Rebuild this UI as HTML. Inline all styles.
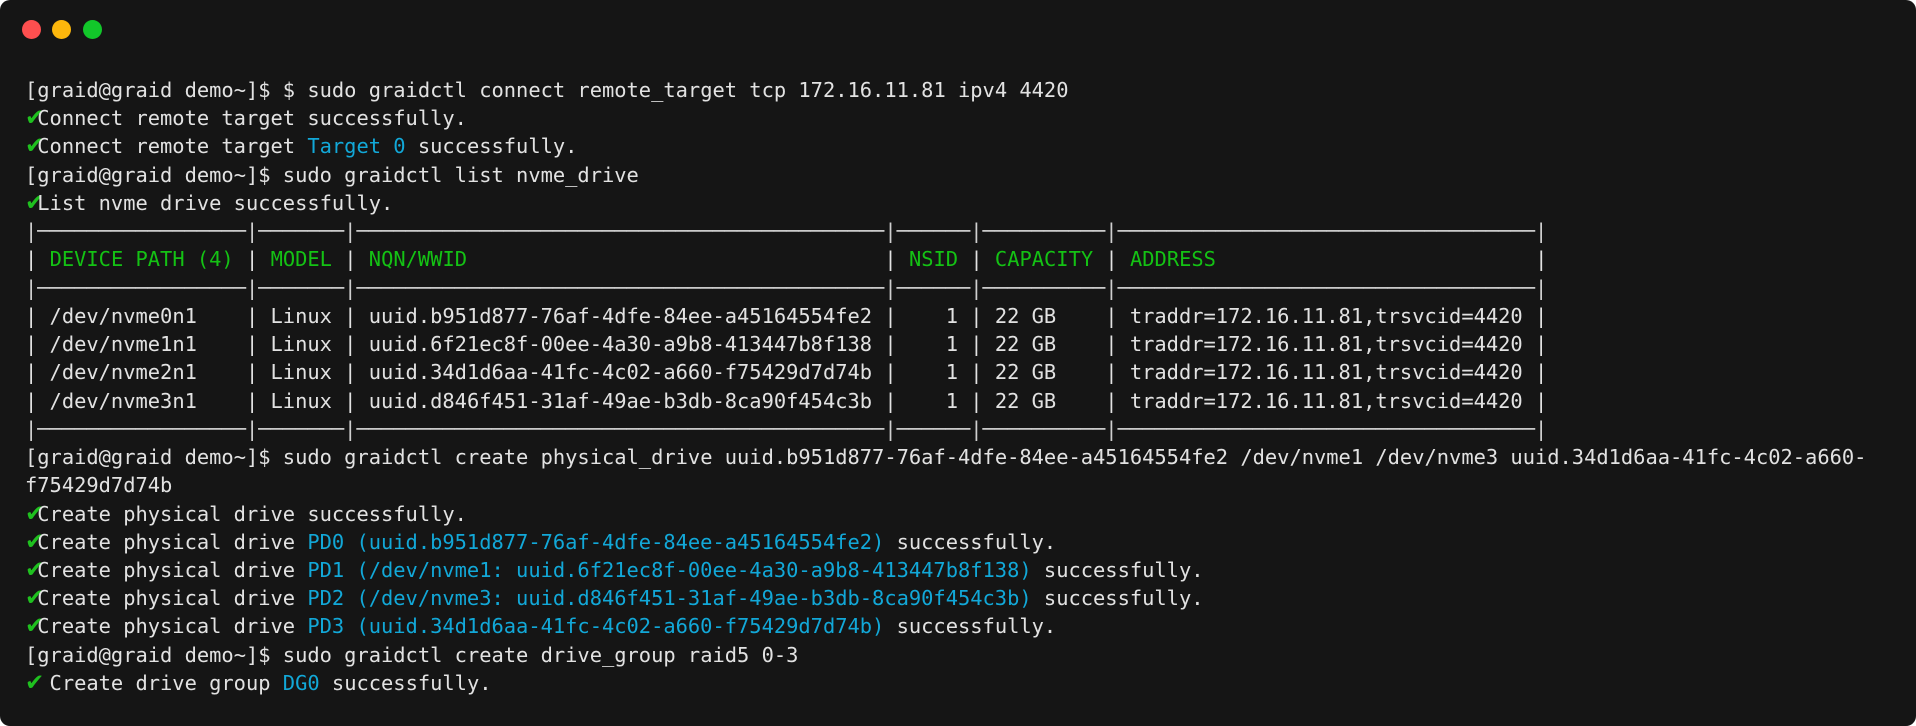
<!DOCTYPE html>
<html><head><meta charset="utf-8"><style>
html,body{margin:0;padding:0;background:#fff;}
.win{position:absolute;left:0;top:0;width:1916px;height:726px;background:#151515;border-radius:10px;overflow:hidden;}
.dot{position:absolute;top:20px;width:19px;height:19px;border-radius:50%;}
pre{position:absolute;left:25px;top:76px;margin:0;font-family:"DejaVu Sans Mono","Liberation Mono",monospace;font-size:20.4px;line-height:28.24px;color:#e2e2e2;white-space:pre;}
.g{color:#14c214}.c{color:#12a8d8}
.k{color:#1fc01f;display:inline-block;width:12.28px;font-family:"DejaVu Sans",sans-serif;font-size:23px;line-height:20px;overflow:visible;}
.t{color:#cfcfcf}
</style></head><body><div class="win">
<div class="dot" style="left:22px;background:#fe4f4f"></div>
<div class="dot" style="left:52px;background:#fdb70c"></div>
<div class="dot" style="left:83px;background:#12c72a"></div>
<pre>[graid@graid demo~]$ $ sudo graidctl connect remote_target tcp 172.16.11.81 ipv4 4420
<span class="k">✔</span>Connect remote target successfully.
<span class="k">✔</span>Connect remote target <span class="c">Target 0</span> successfully.
[graid@graid demo~]$ sudo graidctl list nvme_drive
<span class="k">✔</span>List nvme drive successfully.
<span class="t">|─────────────────|───────|───────────────────────────────────────────|──────|──────────|──────────────────────────────────|</span>
| <span class="g">DEVICE PATH (4)</span> | <span class="g">MODEL</span> | <span class="g">NQN/WWID</span>                                  | <span class="g">NSID</span> | <span class="g">CAPACITY</span> | <span class="g">ADDRESS</span>                          |
<span class="t">|─────────────────|───────|───────────────────────────────────────────|──────|──────────|──────────────────────────────────|</span>
| /dev/nvme0n1    | Linux | uuid.b951d877-76af-4dfe-84ee-a45164554fe2 |    1 | 22 GB    | traddr=172.16.11.81,trsvcid=4420 |
| /dev/nvme1n1    | Linux | uuid.6f21ec8f-00ee-4a30-a9b8-413447b8f138 |    1 | 22 GB    | traddr=172.16.11.81,trsvcid=4420 |
| /dev/nvme2n1    | Linux | uuid.34d1d6aa-41fc-4c02-a660-f75429d7d74b |    1 | 22 GB    | traddr=172.16.11.81,trsvcid=4420 |
| /dev/nvme3n1    | Linux | uuid.d846f451-31af-49ae-b3db-8ca90f454c3b |    1 | 22 GB    | traddr=172.16.11.81,trsvcid=4420 |
<span class="t">|─────────────────|───────|───────────────────────────────────────────|──────|──────────|──────────────────────────────────|</span>
[graid@graid demo~]$ sudo graidctl create physical_drive uuid.b951d877-76af-4dfe-84ee-a45164554fe2 /dev/nvme1 /dev/nvme3 uuid.34d1d6aa-41fc-4c02-a660-
f75429d7d74b
<span class="k">✔</span>Create physical drive successfully.
<span class="k">✔</span>Create physical drive <span class="c">PD0 (uuid.b951d877-76af-4dfe-84ee-a45164554fe2)</span> successfully.
<span class="k">✔</span>Create physical drive <span class="c">PD1 (/dev/nvme1: uuid.6f21ec8f-00ee-4a30-a9b8-413447b8f138)</span> successfully.
<span class="k">✔</span>Create physical drive <span class="c">PD2 (/dev/nvme3: uuid.d846f451-31af-49ae-b3db-8ca90f454c3b)</span> successfully.
<span class="k">✔</span>Create physical drive <span class="c">PD3 (uuid.34d1d6aa-41fc-4c02-a660-f75429d7d74b)</span> successfully.
[graid@graid demo~]$ sudo graidctl create drive_group raid5 0-3
<span class="k">✔</span> Create drive group <span class="c">DG0</span> successfully.</pre>
</div></body></html>
